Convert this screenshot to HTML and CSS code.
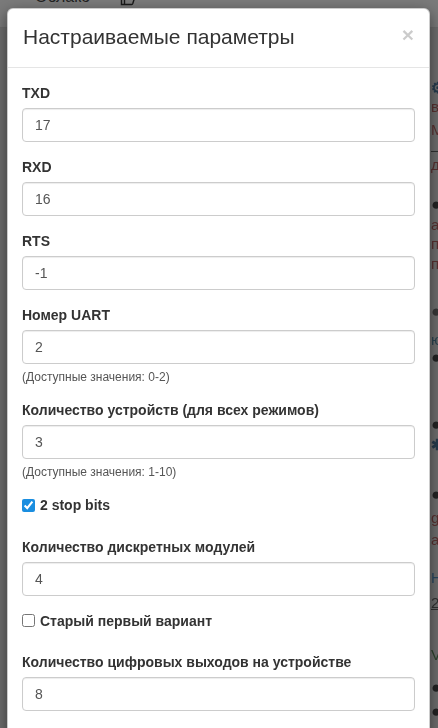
FILE: index.html
```html
<!DOCTYPE html>
<html lang="ru">

<head>
	<meta charset="UTF-8">
	<meta name="viewport" content="width=device-width, initial-scale=1.0">
	<title>Настраиваемые параметры</title>
	<link rel="stylesheet" href="styles.css">
</head>

<body>

	<div class="page">
		<div class="navbar">
			<span class="navbar-item">Облако</span>
			<svg class="navbar-icon" width="16" height="16" viewBox="0 0 16 16">
				<path d="M1.5 7h3v7.5h-3z M4.5 8l3-5.5c1.2 0 1.8 1 1.5 2.2L8.6 7h4.4c1 0 1.6.9 1.3 1.8l-1.6 4.9c-.3.6-.8.8-1.3.8H4.5" fill="none" stroke="#333" stroke-width="1.4" />
			</svg>
		</div>

		<div class="page-side">
			<span class="side-icon">&#9881;</span>
			<span class="side-red">ва</span>
			<span class="side-red">М</span>
			<span class="side-grey">– .</span>
			<span class="side-red">д</span>
			<span class="side-dot">&#9679;</span>
			<span class="side-red">а</span>
			<span class="side-red">п</span>
			<span class="side-red">п</span>
			<span class="side-dot side-dot-grey">&#9679;</span>
			<span class="side-teal">ю</span>
			<span class="side-dot">&#9679;</span>
			<span class="side-dot">&#9679;</span>
			<span class="side-icon">&#10033;</span>
			<span class="side-dot">&#9679;</span>
			<span class="side-red">ge</span>
			<span class="side-red">аж</span>
			<span class="side-blue">Н</span>
			<span class="side-grey side-link">2 (</span>
			<span class="side-green">Ve</span>
			<span class="side-dot">&#9679;</span>
			<span class="side-dot">&#9679;</span>
		</div>
	</div>

	<div class="modal-backdrop"></div>

	<div class="modal-dialog">
		<div class="modal-header">
			<h4 class="modal-title">Настраиваемые параметры</h4>
			<button class="close" type="button">&times;</button>
		</div>

		<form class="modal-body">
			<div class="form-group">
				<label for="txd">TXD</label>
				<input id="txd" class="form-control" type="text" value="17" />
			</div>

			<div class="form-group">
				<label for="rxd">RXD</label>
				<input id="rxd" class="form-control" type="text" value="16" />
			</div>

			<div class="form-group">
				<label for="rts">RTS</label>
				<input id="rts" class="form-control" type="text" value="-1" />
			</div>

			<div class="form-group">
				<label for="uart">Номер UART</label>
				<input id="uart" class="form-control" type="text" value="2" />
				<span class="help-block">(Доступные значения: 0-2)</span>
			</div>

			<div class="form-group">
				<label for="devices">Количество устройств (для всех режимов)</label>
				<input id="devices" class="form-control" type="text" value="3" />
				<span class="help-block">(Доступные значения: 1-10)</span>
			</div>

			<div class="checkbox">
				<label><input type="checkbox" checked /> 2 stop bits</label>
			</div>

			<div class="form-group">
				<label for="modules">Количество дискретных модулей</label>
				<input id="modules" class="form-control" type="text" value="4" />
			</div>

			<div class="checkbox">
				<label><input type="checkbox" /> Старый первый вариант</label>
			</div>

			<div class="form-group">
				<label for="outputs">Количество цифровых выходов на устройстве</label>
				<input id="outputs" class="form-control" type="text" value="8" />
			</div>
		</form>
	</div>

</body>

</html>
```

FILE: styles.css
```css
* {
	margin: 0;
	padding: 0;
	box-sizing: border-box;
}

body {
	width: 438px;
	height: 728px;
	overflow: hidden;
	font-family: 'Liberation Sans', Arial, Helvetica, sans-serif;
	font-size: 14px;
	line-height: 20px;
	color: #333;
	background: #dcdcdc;
}

.page {
	height: 728px;
}

.navbar {
	display: flex;
	align-items: flex-start;
	gap: 30px;
	height: 28px;
	padding-left: 35px;
	background: #f4f4f4;
	border-bottom: 1px solid #d8d8d8;
	font-size: 16px;
	color: #444;
}

.navbar-item {
	margin-top: -13px;
}

.navbar-icon {
	margin-top: -10px;
}

.page-side {
	display: grid;
	grid-template-rows: 19px 23px 20px 15px 40px 20px 19px 20px 48px 28px 18px 67px 20px 50px 23px 22px 38px 25px 52px 33px 24px 16px;
	margin-top: 52px;
	padding-left: 431px;
	font-size: 15px;
	line-height: 16px;
	white-space: nowrap;
	opacity: .8;
	filter: blur(.4px);
}

.side-icon {
	color: #2a5d8a;
	font-weight: bold;
}

.side-red {
	color: #a94442;
}

.side-grey {
	color: #444;
}

.side-link {
	text-decoration: underline;
}

.side-teal {
	color: #31708f;
}

.side-blue {
	color: #337ab7;
}

.side-green {
	color: #3c763d;
}

.side-dot {
	color: #222;
	font-size: 17px;
}

.side-dot-grey {
	color: #555;
}

.modal-backdrop {
	position: fixed;
	top: 0;
	left: 0;
	right: 0;
	bottom: 0;
	background: rgba(0, 0, 0, .5);
}

.modal-dialog {
	position: fixed;
	top: 8px;
	left: 7px;
	width: 423px;
	height: 760px;
	background: #fff;
	border: 1px solid rgba(0, 0, 0, .2);
	border-radius: 6px;
	box-shadow: 0 5px 15px rgba(0, 0, 0, .5);
}

.modal-header {
	display: flex;
	justify-content: space-between;
	align-items: flex-start;
	padding: 14px 15px 16px;
	border-bottom: 1px solid #e5e5e5;
}

.modal-title {
	font-size: 21px;
	font-weight: normal;
	line-height: 28px;
	color: #333;
}

.close {
	margin-top: 1px;
	background: none;
	border: 0;
	font-family: 'Liberation Sans', Arial, sans-serif;
	font-size: 21px;
	font-weight: bold;
	line-height: 1;
	color: #000;
	opacity: .2;
	cursor: pointer;
}

.modal-body {
	padding: 15px 14px;
}

.form-group {
	margin-bottom: 15px;
}

.form-group label {
	display: block;
	margin-bottom: 5px;
	font-weight: bold;
}

.form-control {
	display: block;
	width: 100%;
	height: 34px;
	padding: 6px 12px;
	font-family: inherit;
	font-size: 14px;
	color: #555;
	background: #fff;
	border: 1px solid #ccc;
	border-radius: 4px;
	box-shadow: inset 0 1px 1px rgba(0, 0, 0, .075);
	outline: 0;
}

.help-block {
	display: block;
	margin-top: 5px;
	font-size: 12px;
	line-height: 16px;
	color: #555;
}

.checkbox {
	margin-bottom: 21.5px;
}

.checkbox label {
	display: flex;
	align-items: center;
	gap: 5px;
	font-weight: bold;
	cursor: pointer;
}

.checkbox input {
	width: 13px;
	height: 13px;
	accent-color: #1a8ee0;
}
```
